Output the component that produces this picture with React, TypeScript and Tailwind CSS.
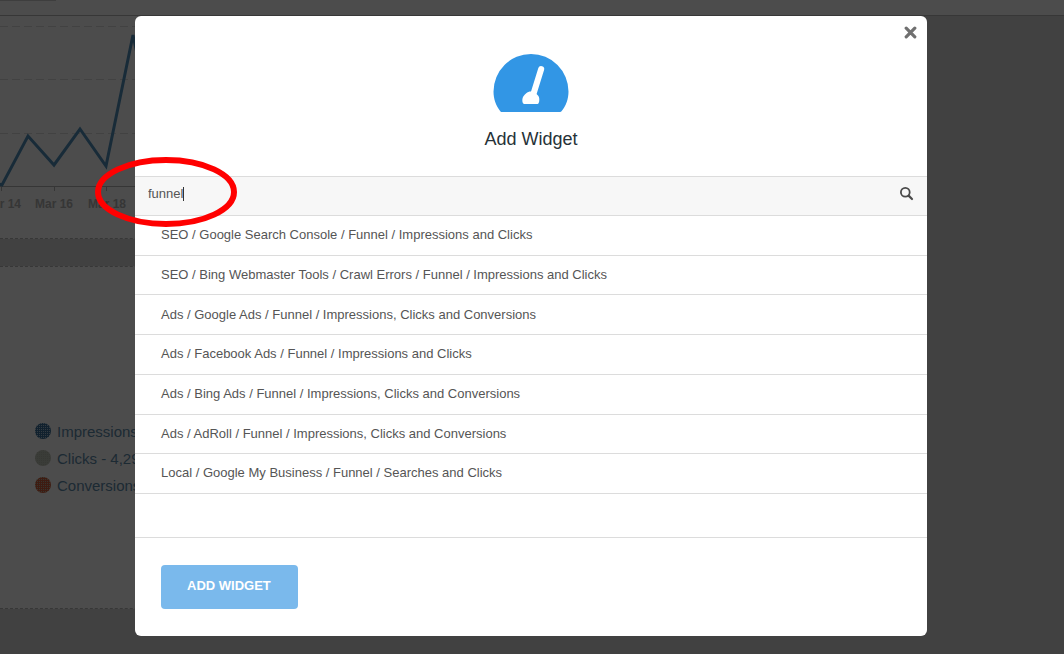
import { useState } from "react";

const widgets = [
  "SEO / Google Search Console / Funnel / Impressions and Clicks",
  "SEO / Bing Webmaster Tools / Crawl Errors / Funnel / Impressions and Clicks",
  "Ads / Google Ads / Funnel / Impressions, Clicks and Conversions",
  "Ads / Facebook Ads / Funnel / Impressions and Clicks",
  "Ads / Bing Ads / Funnel / Impressions, Clicks and Conversions",
  "Ads / AdRoll / Funnel / Impressions, Clicks and Conversions",
  "Local / Google My Business / Funnel / Searches and Clicks",
];

const legend = [
  { label: "Impressions", base: "#3a7099", dot: "#a8c4d8" },
  { label: "Clicks - 4,290", base: "#c4c8bb", dot: "#b8bdb0" },
  { label: "Conversions", base: "#d0603c", dot: "#b8b09a" },
];

function Chart() {
  return (
    <svg width="400" height="222" className="block" aria-label="Impressions by day">
      <g stroke="#dcdcdc" strokeDasharray="8 4">
        <path d="M0 10.5H400M0 63.5H400M0 117.5H400" />
      </g>
      <path d="M0 170.5H400M1.5 171v4M54.5 171v4M106.5 171v4" stroke="#b4b4b4" />
      <path
        d="M-10 165L2 169L28 120L54 149L80 113L106 150L133 19L159 140"
        fill="none"
        stroke="#5290bd"
        strokeWidth="3"
      />
      <g fill="#b4b4b4" fontSize="12" fontWeight="bold" textAnchor="middle">
        <text x="2" y="192">Mar 14</text>
        <text x="54" y="192">Mar 16</text>
        <text x="107" y="192">Mar 18</text>
      </g>
    </svg>
  );
}

function Dashboard() {
  return (
    <div className="flex min-h-screen flex-col bg-[#dadada]" aria-hidden="true">
      <div className="h-4 border-b border-[#b8b8b8] bg-white">
        <div className="h-px w-14 bg-[#d0d0d0]" />
      </div>
      <div className="w-1/2 overflow-hidden">
        <div className="h-[223px] border-b border-dashed border-[#b8b8b8] bg-white">
          <Chart />
        </div>
        <div className="mt-[27px] border-y border-dashed border-[#b8b8b8] bg-white pt-[151px] pb-[109px]">
          <ul className="px-[35px] text-[15px] leading-[27px] text-[#5f8cac]">
            {legend.map((item, i) => (
              <li key={item.label} className="flex items-center gap-1.5">
                <svg width="16" height="16" viewBox="0 0 16 16" className="mb-0.5">
                  <defs>
                    <pattern id={`fill-${i}`} width="2" height="2" patternUnits="userSpaceOnUse">
                      <rect width="2" height="2" fill={item.base} />
                      <rect width="1" height="1" fill={item.dot} />
                    </pattern>
                  </defs>
                  <circle cx="8" cy="8" r="8" fill={`url(#fill-${i})`} />
                </svg>
                {item.label}
              </li>
            ))}
          </ul>
        </div>
      </div>
    </div>
  );
}

function GaugeIcon() {
  return (
    <svg width="76" height="58" viewBox="0 0 76 58" aria-hidden="true">
      <path
        d="M7.5 57.500C3 52 .5 45 .5 37.500a37.500 37.500 0 0 1 75 0C75.500 45 73 52 68.500 57.200Q68 58 67 58H9Q8 58 7.500 57.500Z"
        fill="#3296e5"
      />
      <path d="M48.200 15L39.500 43" stroke="#fff" strokeWidth="6" strokeLinecap="round" />
      <path
        d="M31 50C29.300 49.500 29.200 47 29.400 45C30 42 31.500 41 33 39.500C35 37.500 37 37.200 39 37.500C42 37.700 42.500 39.500 44 40.500C46 42 46.400 44 46.300 46C46.300 48 45.500 50 44.500 50Z"
        fill="#fff"
      />
    </svg>
  );
}

export default function App() {
  const [query, setQuery] = useState("funnel");

  return (
    <div className="relative font-['Liberation_Sans',Arial,sans-serif]">
      <Dashboard />
      <div className="absolute inset-0 flex items-start justify-center bg-black/70 pt-4 pr-0.5">
        <section
          role="dialog"
          aria-labelledby="dialog-title"
          className="relative w-full max-w-[792px] rounded-md bg-white text-[13px] text-[#555]"
        >
          <button type="button" aria-label="Close" className="absolute top-2 right-2 p-0.5">
            <svg width="13" height="13" viewBox="0 0 13 13" className="block">
              <path d="M2.200 2.200L10.800 10.800M10.800 2.200L2.200 10.800" stroke="#707070" strokeWidth="3.200" strokeLinecap="round" />
            </svg>
          </button>

          <header className="flex h-40 flex-col items-center pt-[38px]">
            <GaugeIcon />
            <h1 id="dialog-title" className="mt-[15px] text-lg leading-6 text-[#263238]">
              Add Widget
            </h1>
          </header>

          <div className="flex h-10 items-center border-y border-[#dcdcdc] bg-[#f7f7f7] pr-3.5 pb-1 pl-[13px]">
            <input
              type="text"
              aria-label="Search widgets"
              value={query}
              onChange={(e) => setQuery(e.target.value)}
              className="field-sizing-content bg-transparent caret-transparent outline-none"
            />
            <span className="h-3.5 w-px bg-[#333]" />
            <button type="button" aria-label="Search" className="ml-auto pb-0.5">
              <svg width="13" height="13" viewBox="0 0 13 13" className="block overflow-visible" fill="none" stroke="#4a4a4a">
                <circle cx="5.300" cy="5.300" r="4.400" strokeWidth="1.800" />
                <path d="M8.600 8.600L12 12" strokeWidth="2.200" strokeLinecap="round" />
              </svg>
            </button>
          </div>

          <ul className="grid h-[278px] grid-rows-7">
            {widgets.map((name) => (
              <li key={name} className="flex border-b border-[#dcdcdc]">
                <button type="button" className="flex-1 px-[26px] pb-px text-left">
                  {name}
                </button>
              </li>
            ))}
          </ul>

          <footer className="mt-[43px] border-t border-[#dcdcdc] p-[26px] pt-[27px] pb-[27px]">
            <button
              type="button"
              className="block h-11 min-w-[137px] rounded bg-[#7ab9ec] px-[26px] pb-0.5 text-left text-[13px] font-bold text-white"
            >
              ADD WIDGET
            </button>
          </footer>

          <svg
            width="142"
            height="70"
            viewBox="0 0 142 70"
            className="pointer-events-none absolute top-[141px] -left-10"
            aria-hidden="true"
          >
            <ellipse cx="71" cy="35" rx="68" ry="32" fill="none" stroke="#f00" strokeWidth="6" />
          </svg>
        </section>
      </div>
    </div>
  );
}
